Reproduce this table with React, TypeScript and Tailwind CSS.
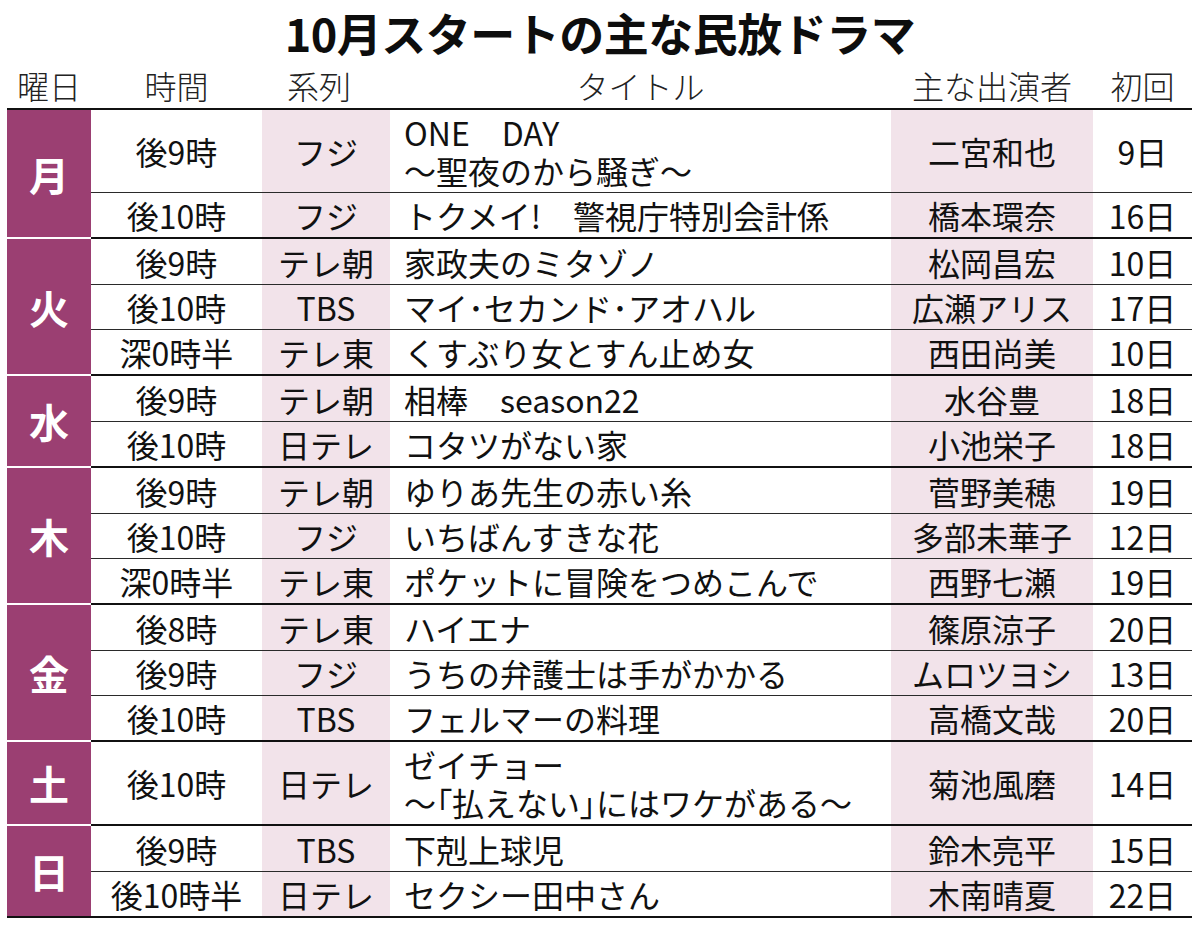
import React from "react";

type Row = { time: string; ch: string; title: React.ReactNode[]; cast: string; date: string };
type Group = { day: string; rows: Row[] };

const P = ({ c }: { c: string }) => <span className="[font-feature-settings:'palt']">{c}</span>;

const groups: Group[] = [
  {
    day: "月",
    rows: [
      { time: "後9時", ch: "フジ", title: ["ONE　DAY", "〜聖夜のから騒ぎ〜"], cast: "二宮和也", date: "9日" },
      { time: "後10時", ch: "フジ", title: ["トクメイ!　警視庁特別会計係"], cast: "橋本環奈", date: "16日" },
    ],
  },
  {
    day: "火",
    rows: [
      { time: "後9時", ch: "テレ朝", title: ["家政夫のミタゾノ"], cast: "松岡昌宏", date: "10日" },
      { time: "後10時", ch: "TBS", title: ["マイ･セカンド･アオハル"], cast: "広瀬アリス", date: "17日" },
      { time: "深0時半", ch: "テレ東", title: ["くすぶり女とすん止め女"], cast: "西田尚美", date: "10日" },
    ],
  },
  {
    day: "水",
    rows: [
      { time: "後9時", ch: "テレ朝", title: ["相棒　season22"], cast: "水谷豊", date: "18日" },
      { time: "後10時", ch: "日テレ", title: ["コタツがない家"], cast: "小池栄子", date: "18日" },
    ],
  },
  {
    day: "木",
    rows: [
      { time: "後9時", ch: "テレ朝", title: ["ゆりあ先生の赤い糸"], cast: "菅野美穂", date: "19日" },
      { time: "後10時", ch: "フジ", title: ["いちばんすきな花"], cast: "多部未華子", date: "12日" },
      { time: "深0時半", ch: "テレ東", title: ["ポケットに冒険をつめこんで"], cast: "西野七瀬", date: "19日" },
    ],
  },
  {
    day: "金",
    rows: [
      { time: "後8時", ch: "テレ東", title: ["ハイエナ"], cast: "篠原涼子", date: "20日" },
      { time: "後9時", ch: "フジ", title: ["うちの弁護士は手がかかる"], cast: "ムロツヨシ", date: "13日" },
      { time: "後10時", ch: "TBS", title: ["フェルマーの料理"], cast: "高橋文哉", date: "20日" },
    ],
  },
  {
    day: "土",
    rows: [
      {
        time: "後10時",
        ch: "日テレ",
        title: [
          "ゼイチョー",
          <>
            〜<P c="「" />払えない<P c="」" />にはワケがある〜
          </>,
        ],
        cast: "菊池風磨",
        date: "14日",
      },
    ],
  },
  {
    day: "日",
    rows: [
      { time: "後9時", ch: "TBS", title: ["下剋上球児"], cast: "鈴木亮平", date: "15日" },
      { time: "後10時半", ch: "日テレ", title: ["セクシー田中さん"], cast: "木南晴夏", date: "22日" },
    ],
  },
];

function DataRow({ row, first }: { row: Row; first: boolean }) {
  const double = row.title.length > 1;
  return (
    <div
      className={
        "grid grid-cols-[171px_128px_501px_202px_99px] text-[32px] leading-none text-[#111] " +
        (double ? "h-[82px] " : "h-[45px] ") +
        (first ? "" : "border-t border-[#2a2a2a]")
      }
    >
      <div className="flex items-center justify-center">{row.time}</div>
      <div className="flex items-center justify-center bg-[#f2e3ea]">{row.ch}</div>
      <div className="flex flex-col justify-center pl-[14px] whitespace-nowrap">
        {row.title.map((t, i) => (
          <div key={i} className={double ? "leading-[38px]" : ""}>
            {t}
          </div>
        ))}
      </div>
      <div className="flex items-center justify-center bg-[#f2e3ea]">{row.cast}</div>
      <div className="flex items-center justify-center">{row.date}</div>
    </div>
  );
}

export default function App() {
  return (
    <div
      className="w-[1200px] h-[936px] bg-white overflow-hidden font-['Noto_Sans_CJK_JP','Noto_Sans',sans-serif]"
    >
      <div className="h-[62px] flex items-center justify-center text-[45px] leading-none font-bold text-[#0d0d0d] tracking-[-0.5px] pt-[2px]">
        10月スタートの主な民放ドラマ
      </div>
      <div className="ml-[7px] w-[1185px]">
        <div className="grid grid-cols-[84px_171px_128px_501px_202px_99px] h-[48px] border-b-2 border-[#111] text-[32px] font-light leading-none text-[#222]">
          <div className="flex items-center justify-center">曜日</div>
          <div className="flex items-center justify-center">時間</div>
          <div className="flex items-center justify-center pr-[14px]">系列</div>
          <div className="flex items-center justify-center">タイトル</div>
          <div className="flex items-center justify-center">主な出演者</div>
          <div className="flex items-center justify-center">初回</div>
        </div>
        {groups.map((g, gi) => (
          <div key={g.day} className="flex">
            <div
              className={
                "w-[84px] flex items-center justify-center bg-[#9b3f72] text-white text-[40px] leading-none font-bold " +
                (gi === 0 ? "" : "mt-[2px]")
              }
            >
              {g.day}
            </div>
            <div className={"flex flex-col " + (gi === 0 ? "" : "border-t-2 border-[#111]")}>
              {g.rows.map((r, ri) => (
                <DataRow key={ri} row={r} first={ri === 0} />
              ))}
            </div>
          </div>
        ))}
        <div className="border-t-2 border-[#111]" />
      </div>
    </div>
  );
}
